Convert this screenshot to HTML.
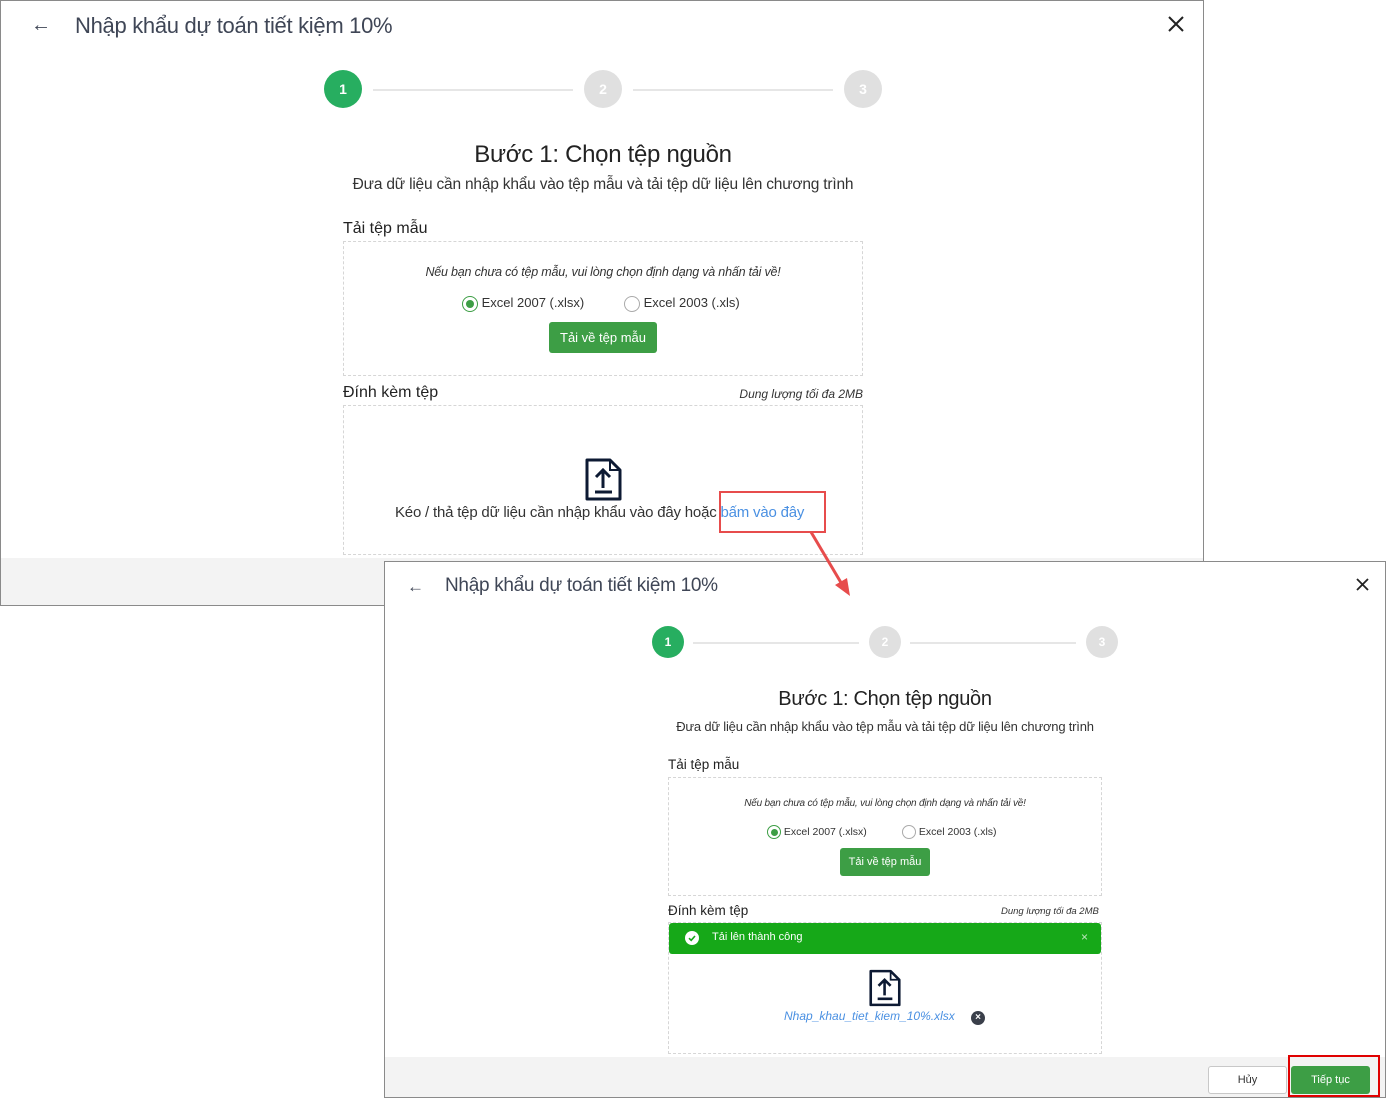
<!DOCTYPE html>
<html><head><meta charset="utf-8"><style>
*{margin:0;padding:0;box-sizing:border-box}
body{width:1390px;height:1104px;background:#fff;position:relative;overflow:hidden;font-family:"Liberation Sans",sans-serif;color:#333}
.a{position:absolute;white-space:nowrap}
.dlg{position:absolute;background:#fff;border:1px solid #8a8a8a;overflow:hidden}
.foot{position:absolute;left:0;right:0;bottom:0;background:#f3f3f3}
.c{position:absolute;border-radius:50%;color:#fff;font-weight:bold;text-align:center}
.ln{position:absolute;height:2px;background:#e6e6e6}
.dash{position:absolute;border:1px dashed #d6d6d6}
.btn{position:absolute;background:#3d9e45;color:#fff;border-radius:3px;text-align:center}
.ctr{transform:translateX(-50%)}
.rad{display:inline-block;border-radius:50%;border:1px solid #aaa;vertical-align:middle;position:relative;background:#fff}
.rad.on{border-color:#3d9e45}
.rad.on::after{content:"";position:absolute;border-radius:50%;background:#3d9e45;left:3px;top:3px;width:8px;height:8px}
.s::after{left:2.5px!important;top:2.5px!important;width:7px!important;height:7px!important}
</style></head><body>

<!-- dialog 1 -->
<div class="dlg" style="left:0;top:0;width:1204px;height:606px">
  <div class="foot" style="top:557px"></div>
  <div class="a" style="left:30px;top:13px;font-size:20px;color:#3f4656">&#8592;</div>
  <div class="a" style="left:74px;top:12px;font-size:22px;color:#3f4656;letter-spacing:-0.3px">Nhập khẩu dự toán tiết kiệm 10%</div>
  <svg class="a" style="left:1167px;top:15px" width="16" height="16" viewBox="0 0 16 16"><path d="M1 1L15 15M15 1L1 15" stroke="#222" stroke-width="2"/></svg>
  <div class="c" style="left:323px;top:69px;width:38px;height:38px;line-height:38px;background:#27ae60;font-size:14px">1</div>
  <div class="ln" style="left:372px;top:88px;width:200px"></div>
  <div class="c" style="left:583px;top:69px;width:38px;height:38px;line-height:38px;background:#e0e0e0;font-size:14px">2</div>
  <div class="ln" style="left:632px;top:88px;width:200px"></div>
  <div class="c" style="left:843px;top:69px;width:38px;height:38px;line-height:38px;background:#e0e0e0;font-size:14px">3</div>
  <div class="a ctr" style="left:602px;top:140px;font-size:24px;color:#222;letter-spacing:-0.3px">Bước 1: Chọn tệp nguồn</div>
  <div class="a ctr" style="left:602px;top:175px;font-size:15.5px;color:#333;letter-spacing:-0.2px">Đưa dữ liệu cần nhập khẩu vào tệp mẫu và tải tệp dữ liệu lên chương trình</div>
  <div class="a" style="left:342px;top:219px;font-size:16px;color:#222">Tải tệp mẫu</div>
  <div class="dash" style="left:342px;top:240px;width:520px;height:135px"></div>
  <div class="a ctr" style="left:602px;top:264px;font-size:12.5px;font-style:italic;color:#333;letter-spacing:-0.2px">Nếu bạn chưa có tệp mẫu, vui lòng chọn định dạng và nhấn tải về!</div>
  <div class="a" style="left:461px;top:294px;font-size:13px;color:#333"><span class="rad on" style="width:16px;height:16px"></span> Excel 2007 (.xlsx)</div>
  <div class="a" style="left:623px;top:294px;font-size:13px;color:#333"><span class="rad" style="width:16px;height:16px"></span> Excel 2003 (.xls)</div>
  <div class="btn" style="left:548px;top:321px;width:108px;height:31px;line-height:31px;font-size:13px">Tải về tệp mẫu</div>
  <div class="a" style="left:342px;top:383px;font-size:16px;color:#222">Đính kèm tệp</div>
  <div class="a" style="right:340px;top:386px;font-size:12px;font-style:italic;color:#333">Dung lượng tối đa 2MB</div>
  <div class="dash" style="left:342px;top:404px;width:520px;height:150px"></div>
  <svg class="a" style="left:584px;top:457px" width="37" height="43" viewBox="0 0 37 43"><path d="M2 2H25L35 12V41H2Z" fill="none" stroke="#0d1a33" stroke-width="3" stroke-linejoin="round"/><path d="M25 2V12H35" fill="none" stroke="#0d1a33" stroke-width="2"/><path d="M18 30V12M11 19L18 12L25 19M10 34H27" fill="none" stroke="#0d1a33" stroke-width="3"/></svg>
  <div class="a" style="left:394px;top:503px;font-size:15px;color:#333;letter-spacing:-0.2px">Kéo / thả tệp dữ liệu cần nhập khẩu vào đây hoặc <span style="color:#4a90e2">bấm vào đây</span></div>
  <div class="a" style="left:718px;top:490px;width:107px;height:42px;border:2px solid #e74c4c"></div>
</div>

<!-- dialog 2 -->
<div class="dlg" style="left:384px;top:561px;width:1002px;height:537px">
  <div class="foot" style="top:495px"></div>
  <div class="a" style="left:22px;top:15px;font-size:17px;color:#3f4656">&#8592;</div>
  <div class="a" style="left:60px;top:13px;font-size:19px;color:#3f4656;letter-spacing:-0.3px">Nhập khẩu dự toán tiết kiệm 10%</div>
  <svg class="a" style="left:971px;top:16px" width="13" height="13" viewBox="0 0 13 13"><path d="M1 1L12 12M12 1L1 12" stroke="#222" stroke-width="1.8"/></svg>
  <div class="c" style="left:267px;top:64px;width:32px;height:32px;line-height:32px;background:#27ae60;font-size:12px">1</div>
  <div class="ln" style="left:308px;top:80px;width:166px"></div>
  <div class="c" style="left:484px;top:64px;width:32px;height:32px;line-height:32px;background:#e0e0e0;font-size:12px">2</div>
  <div class="ln" style="left:525px;top:80px;width:166px"></div>
  <div class="c" style="left:701px;top:64px;width:32px;height:32px;line-height:32px;background:#e0e0e0;font-size:12px">3</div>
  <div class="a ctr" style="left:500px;top:126px;font-size:20px;color:#222;letter-spacing:-0.3px">Bước 1: Chọn tệp nguồn</div>
  <div class="a ctr" style="left:500px;top:157px;font-size:13px;color:#333;letter-spacing:-0.2px">Đưa dữ liệu cần nhập khẩu vào tệp mẫu và tải tệp dữ liệu lên chương trình</div>
  <div class="a" style="left:283px;top:195px;font-size:13.5px;color:#222">Tải tệp mẫu</div>
  <div class="dash" style="left:283px;top:215px;width:434px;height:119px"></div>
  <div class="a ctr" style="left:500px;top:236px;font-size:10px;font-style:italic;color:#333;letter-spacing:-0.2px">Nếu bạn chưa có tệp mẫu, vui lòng chọn định dạng và nhấn tải về!</div>
  <div class="a" style="left:382px;top:263px;font-size:10.5px;color:#333"><span class="rad on s" style="width:14px;height:14px"></span> Excel 2007 (.xlsx)</div>
  <div class="a" style="left:517px;top:263px;font-size:10.5px;color:#333"><span class="rad" style="width:14px;height:14px"></span> Excel 2003 (.xls)</div>
  <div class="btn" style="left:455px;top:286px;width:90px;height:28px;line-height:28px;font-size:11px">Tải về tệp mẫu</div>
  <div class="a" style="left:283px;top:341px;font-size:13.5px;color:#222">Đính kèm tệp</div>
  <div class="a" style="left:616px;top:344px;font-size:9.5px;font-style:italic;color:#333">Dung lượng tối đa 2MB</div>
  <div class="dash" style="left:283px;top:360px;width:434px;height:132px"></div>
  <div class="a" style="left:284px;top:361px;width:432px;height:31px;background:#16a818;border-radius:3px"></div>
  <div class="a" style="left:300px;top:369px;width:14px;height:14px;border-radius:50%;background:#fff"></div>
  <svg class="a" style="left:300px;top:369px" width="14" height="14"><path d="M4 7.2L6.2 9.3L10 5" fill="none" stroke="#16a818" stroke-width="1.6"/></svg>
  <div class="a" style="left:327px;top:369px;font-size:11px;color:#fff">Tải lên thành công</div>
  <div class="a" style="left:696px;top:368px;font-size:12px;color:#bfe8bf">×</div>
  <svg class="a" style="left:484px;top:407px" width="32" height="38" viewBox="0 0 37 43"><path d="M2 2H25L35 12V41H2Z" fill="none" stroke="#0d1a33" stroke-width="3" stroke-linejoin="round"/><path d="M25 2V12H35" fill="none" stroke="#0d1a33" stroke-width="2"/><path d="M18 30V12M11 19L18 12L25 19M10 34H27" fill="none" stroke="#0d1a33" stroke-width="3"/></svg>
  <div class="a" style="left:399px;top:447px;font-size:12px;font-style:italic;color:#4a90e2">Nhap_khau_tiet_kiem_10%.xlsx</div>
  <div class="a" style="left:586px;top:449px;width:14px;height:14px;border-radius:50%;background:#3a3f4a;color:#fff;font-size:10px;line-height:13px;text-align:center;font-weight:bold">×</div>
  <div class="a" style="left:823px;top:504px;width:79px;height:28px;background:#fff;border:1px solid #c8c8c8;border-radius:3px;font-size:11px;line-height:26px;text-align:center;color:#333">Hủy</div>
  <div class="btn" style="left:906px;top:504px;width:79px;height:28px;line-height:28px;font-size:11px">Tiếp tục</div>
  <div class="a" style="left:903px;top:493px;width:92px;height:42px;border:2px solid #e00000"></div>
</div>

<svg class="a" style="left:800px;top:525px;z-index:5" width="60" height="80"><path d="M11 7L43 61" stroke="#e74c4c" stroke-width="3"/><path d="M50 71L35 60L47 53Z" fill="#e74c4c"/></svg>
</body></html>
